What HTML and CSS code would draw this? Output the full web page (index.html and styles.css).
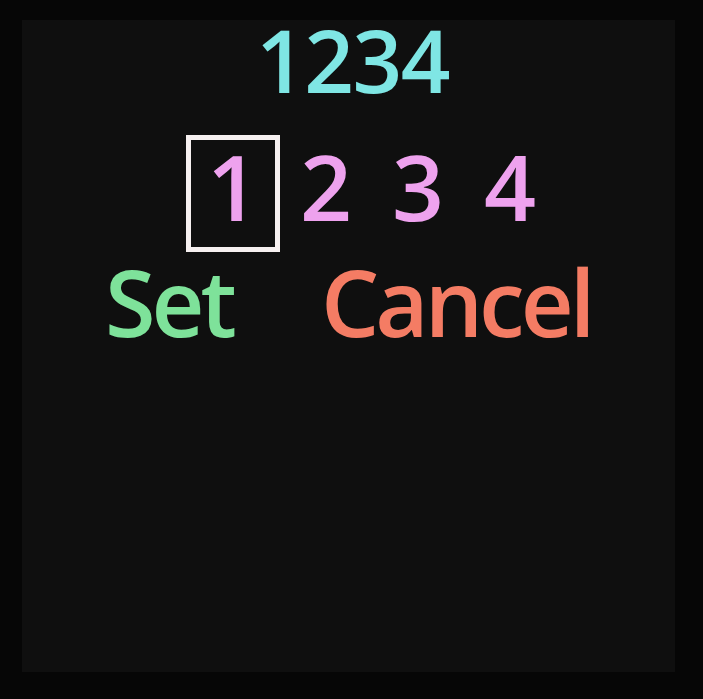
FILE: index.html
```html
<!DOCTYPE html>
<html lang="en">
<head>
<meta charset="utf-8">
<title>PIN entry</title>
<link rel="stylesheet" href="styles.css">
</head>
<body>
<div class="device">
  <div class="title">1234</div>
  <div class="digits">
    <div class="cell selected">1</div>
    <div class="cell">2</div>
    <div class="cell">3</div>
    <div class="cell">4</div>
  </div>
  <div class="actions">
    <span class="action set">Set</span>
    <span class="action cancel">Cancel</span>
  </div>
</div>
</body>
</html>
```

FILE: styles.css
```css
html, body {
  margin: 0;
  padding: 0;
  background: #060606;
  width: 703px;
  height: 699px;
  overflow: hidden;
}

/* the panel: screen colour with the dark bezel drawn round its edges */
.device {
  width: 703px;
  height: 699px;
  box-sizing: border-box;
  padding-top: 16px;
  background: #0f0f0f;
  box-shadow: inset 22px 20px 0 0 #060606, inset -28px -27px 0 0 #060606;
  font-family: "Open Sans", "Noto Sans", sans-serif;
  font-weight: 600;
  display: flex;
  flex-direction: column;
}

.title {
  font-size: 87px;
  line-height: 1;
  color: #7fe6e4;
  text-align: center;
  padding-left: 2px;
  letter-spacing: -1.5px;
}

.digits {
  display: flex;
  margin-top: 32px;
  padding-left: 186px;
}

.cell {
  width: 92px;
  height: 117px;
  box-sizing: border-box;
  border: 5px solid transparent;
  padding-top: 1px;
  font-size: 91px;
  line-height: 1;
  text-align: center;
  color: #eea2ee;
}

.cell.selected {
  width: 94px;
  border-color: #f6f0f0;
}

.actions {
  display: flex;
  gap: 88px;
  margin-top: 4px;
  padding-left: 105px;
  font-size: 92px;
  line-height: 1;
  letter-spacing: -4px;
}

.set {
  color: #7ee29a;
}

.cancel {
  color: #f47c64;
}
```
